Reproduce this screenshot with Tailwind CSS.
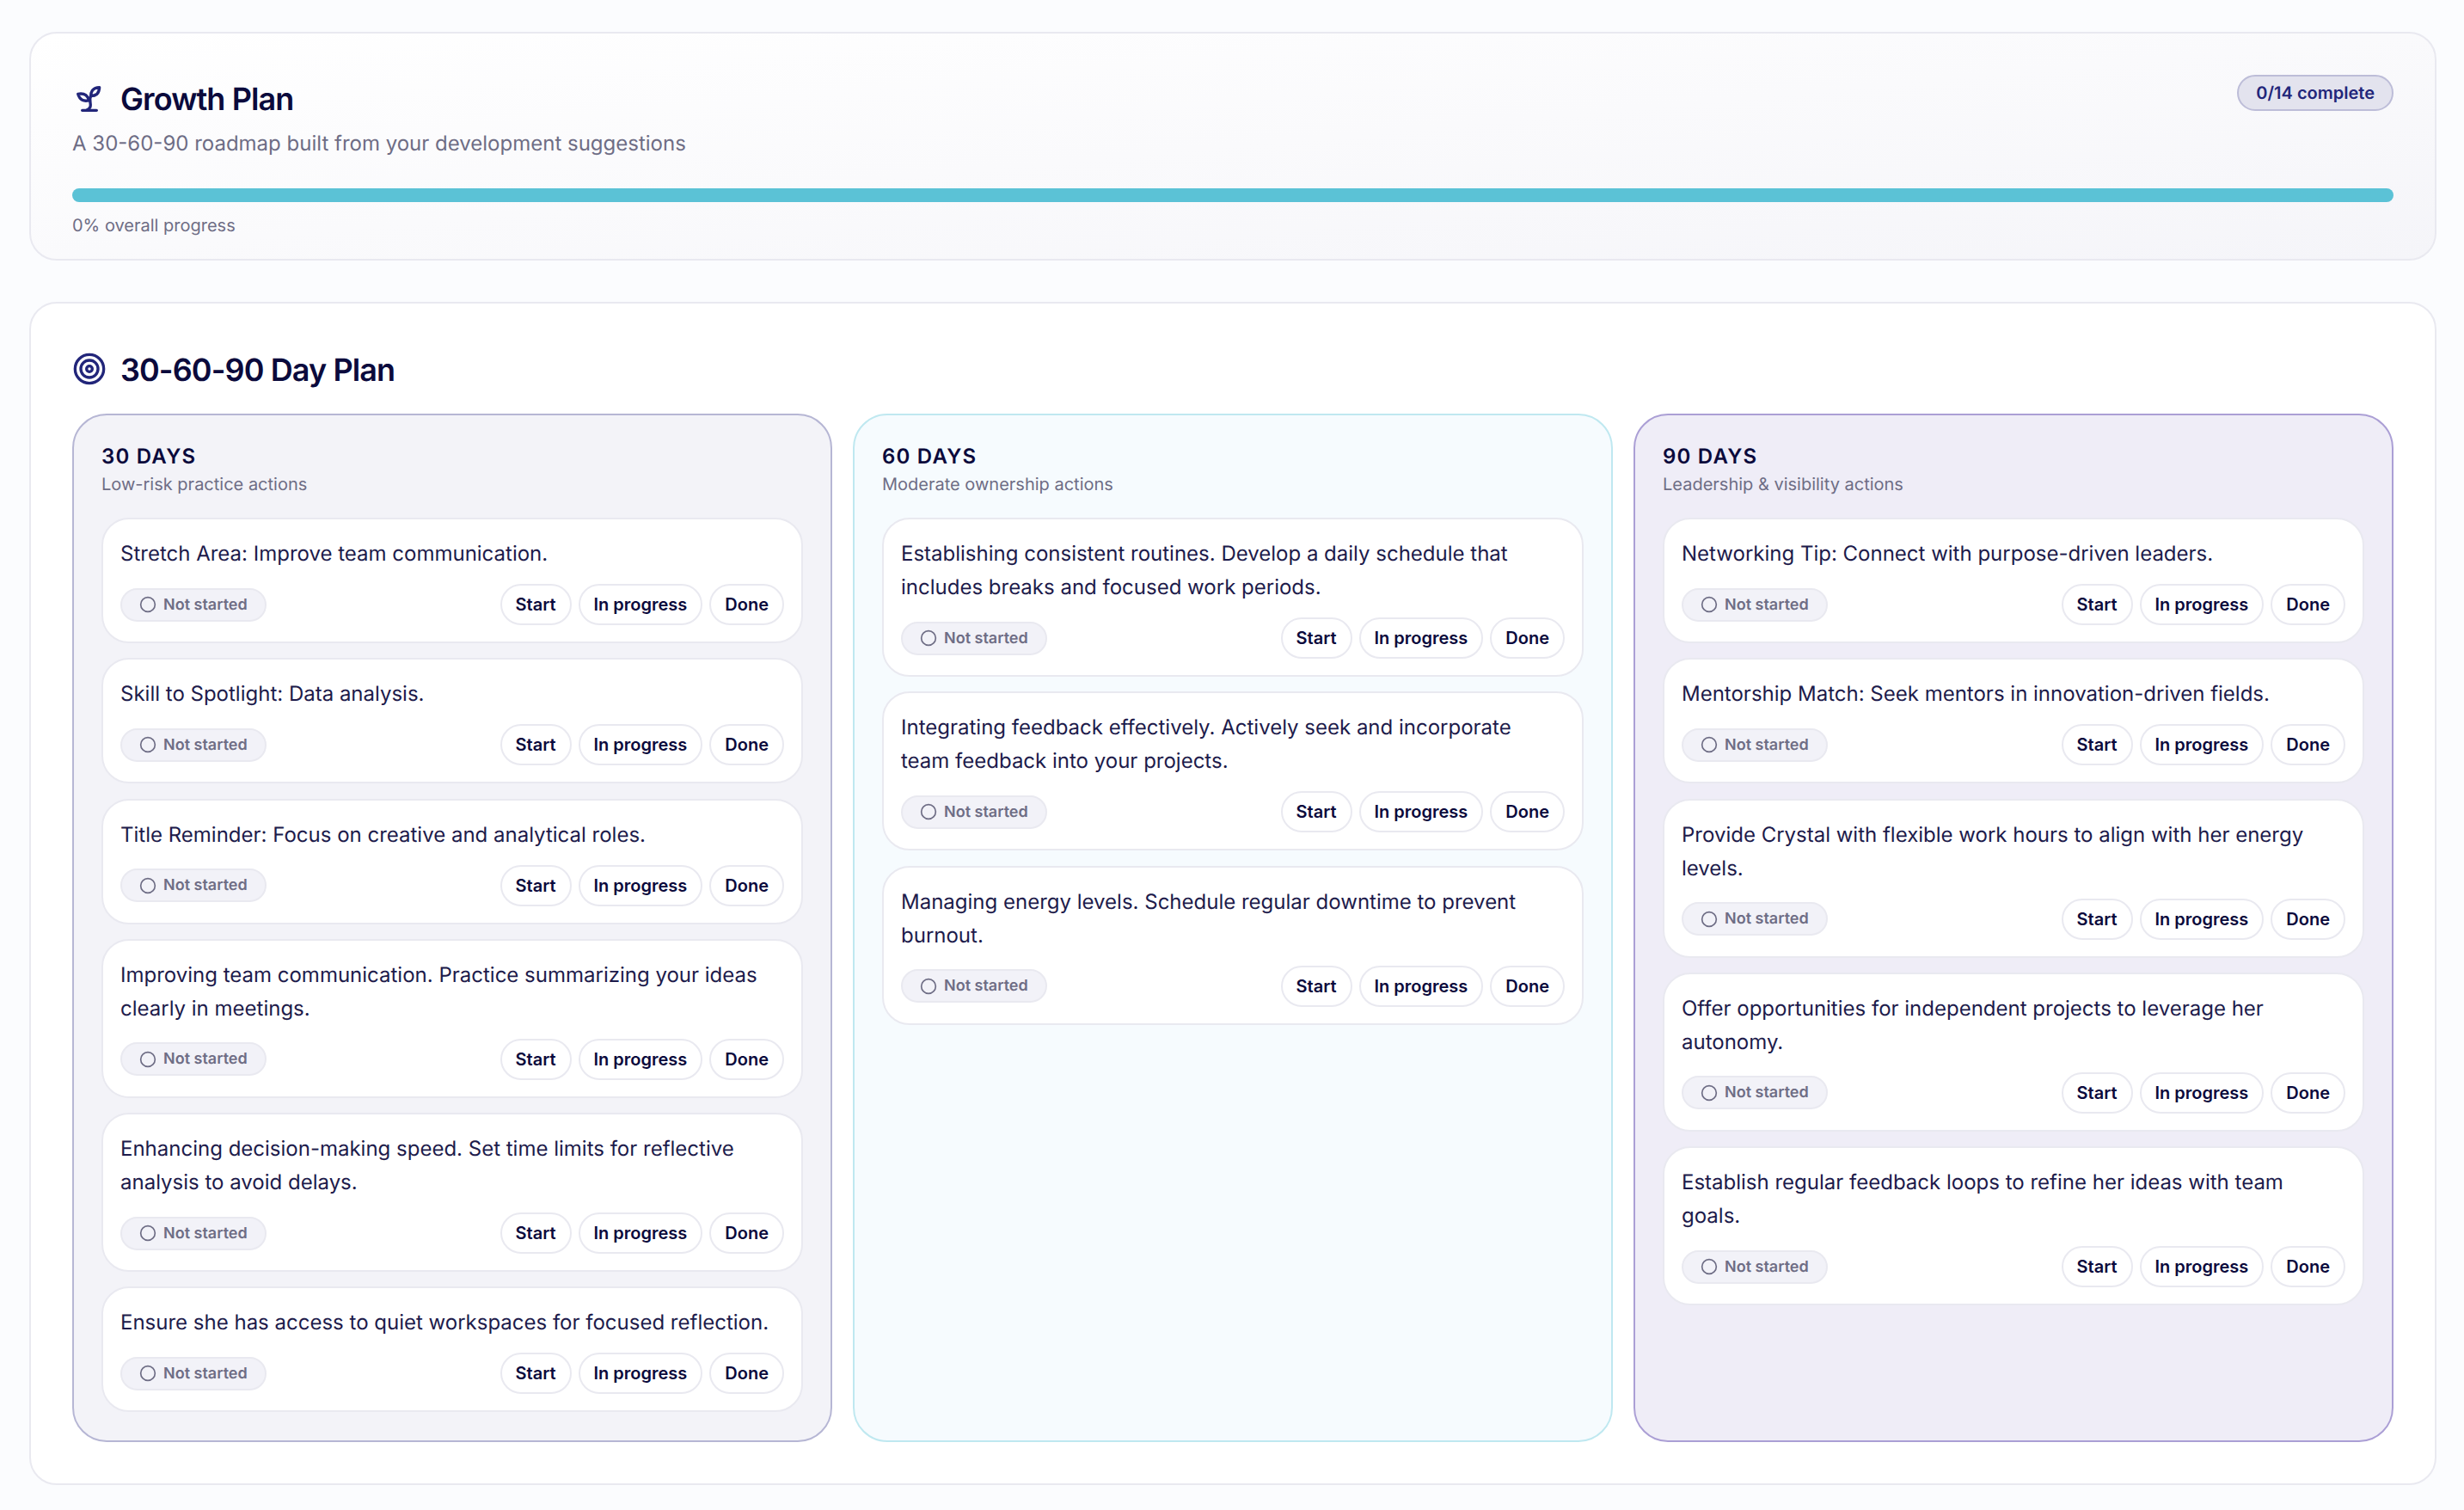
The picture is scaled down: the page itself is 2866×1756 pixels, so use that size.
<!DOCTYPE html>
<html lang="en">
<head>
    <meta charset="UTF-8">
    <meta name="viewport" content="width=device-width, initial-scale=1.0">
    <title>Growth Plan</title>
    <script src="https://cdn.jsdelivr.net/npm/@tailwindcss/browser@4"></script>
</head>
<body class="min-h-screen bg-[#fbfcfe] font-['Inter',sans-serif] text-[#0b0a3c] [text-rendering:geometricPrecision]">
    <main class="flex flex-col gap-12 pl-[34px] pr-[32px] pt-[37px] pb-8">
        <!-- Header -->
        <section class="rounded-[32px] border-2 border-[#e9e9f0] bg-linear-to-br from-white to-[#f5f5f9] px-12 pt-12 pb-[22px]">
            <div class="flex items-start justify-between">
                <div>
                    <div class="flex items-center gap-4">
                        <svg class="size-10 text-[#22267a]" viewBox="0 0 24 24" fill="none" stroke="currentColor" stroke-width="2" stroke-linecap="round" stroke-linejoin="round">
                            <path d="M7 20h10"/>
                            <path d="M10 20c5.5-2.5.8-6.4 3-10"/>
                            <path d="M9.5 9.4c1.1.8 1.8 2.2 2.3 3.7-2 .4-3.5.4-4.8-.3-1.2-.6-2.3-1.9-3-4.2 2.8-.5 4.4 0 5.5.8z"/>
                            <path d="M14.1 6a7 7 0 0 0-1.1 4c1.9-.1 3.3-.6 4.3-1.4 1-1 1.6-2.3 1.7-4.6-2.7.1-4 1-4.9 2z"/>
                        </svg>
                        <h1 class="text-[36px] leading-[56px] font-semibold tracking-[-0.025em]">Growth Plan</h1>
                    </div>
                    <p class="mt-[4px] text-[24px] leading-[40px] text-[#6e6d85]">A 30-60-90 roadmap built from your development suggestions</p>
                </div>
                <span class="rounded-full border-2 border-[#bdbdd8] bg-[#e3e3ee] px-[20px] text-[20px] leading-[38px] font-semibold text-[#22267a]">0/14 complete</span>
            </div>
            <div class="mt-[32px] h-4 rounded-full bg-[#5bc2d6]"></div>
            <p class="mt-[10px] text-[20px] leading-[34px] text-[#6e6d85]">0% overall progress</p>
        </section>

        <!-- Plan -->
        <section class="rounded-[32px] border-2 border-[#e9e9f0] bg-white p-12">
            <div class="flex items-center gap-4">
                <svg class="size-10 text-[#22267a]" viewBox="0 0 24 24" fill="none" stroke="currentColor" stroke-width="2" stroke-linecap="round" stroke-linejoin="round">
                    <circle cx="12" cy="12" r="10"/>
                    <circle cx="12" cy="12" r="6"/>
                    <circle cx="12" cy="12" r="2"/>
                </svg>
                <h2 class="text-[36px] leading-[56px] font-semibold tracking-[-0.025em] translate-y-px">30-60-90 Day Plan</h2>
            </div>
            <div id="columns" class="mt-6 grid grid-cols-3 gap-6"></div>
        </section>
    </main>

    <script>
        const columns = [
            {
                title: '30 DAYS', sub: 'Low-risk practice actions', cls: 'border-[#b6b6d4] bg-[#f3f3f8]',
                items: [
                    'Stretch Area: Improve team communication.',
                    'Skill to Spotlight: Data analysis.',
                    'Title Reminder: Focus on creative and analytical roles.',
                    'Improving team communication. Practice summarizing your ideas clearly in meetings.',
                    'Enhancing decision-making speed. Set time limits for reflective analysis to avoid delays.',
                    'Ensure she has access to quiet workspaces for focused reflection.'
                ]
            },
            {
                title: '60 DAYS', sub: 'Moderate ownership actions', cls: 'border-[#bfe8f0] bg-[#f6fbfe]',
                items: [
                    'Establishing consistent routines. Develop a daily schedule that includes breaks and focused work periods.',
                    'Integrating feedback effectively. Actively seek and incorporate team feedback into your projects.',
                    'Managing energy levels. Schedule regular downtime to prevent burnout.'
                ]
            },
            {
                title: '90 DAYS', sub: 'Leadership & visibility actions', cls: 'border-[#ab9fd5] bg-[#efedf7]',
                items: [
                    'Networking Tip: Connect with purpose-driven leaders.',
                    'Mentorship Match: Seek mentors in innovation-driven fields.',
                    'Provide Crystal with flexible work hours to align with her energy levels.',
                    'Offer opportunities for independent projects to leverage her autonomy.',
                    'Establish regular feedback loops to refine her ideas with team goals.'
                ]
            }
        ];

        const btn = (label) => `<button class="h-12 rounded-full border-2 border-[#e9e9f0] bg-white px-4 text-[20px] font-semibold text-[#0b0a3c]">${label}</button>`;

        const card = (text) => `
            <li class="rounded-[32px] border-2 border-[#e9e9f0] bg-white px-5 pt-5 pb-[19px]">
                <p class="text-[24px] leading-[39px] text-[#1d1b4b]">${text}</p>
                <div class="mt-[16px] flex items-center justify-between">
                    <span class="flex h-[39px] items-center gap-2 rounded-full border-2 border-[#e9e9f0] bg-[#f2f2f8] px-[20px] text-[18px] font-semibold text-[#6e6d85]">
                        <svg class="size-5" viewBox="0 0 24 24" fill="none" stroke="currentColor" stroke-width="2"><circle cx="12" cy="12" r="10"/></svg>
                        Not started
                    </span>
                    <div class="flex gap-2">${btn('Start')}${btn('In progress')}${btn('Done')}</div>
                </div>
            </li>`;

        document.getElementById('columns').innerHTML = columns.map((col) => `
            <div class="rounded-[40px] border-2 ${col.cls} px-8 pt-8 pb-[33px]">
                <h3 class="text-[24px] leading-[32px] font-semibold tracking-[0.05em]">${col.title}</h3>
                <p class="text-[20px] leading-[33px] text-[#6e6d85]">${col.sub}</p>
                <ul class="mt-[22px] flex flex-col gap-[17.3px]">${col.items.map(card).join('')}</ul>
            </div>`).join('');
    </script>
</body>
</html>
